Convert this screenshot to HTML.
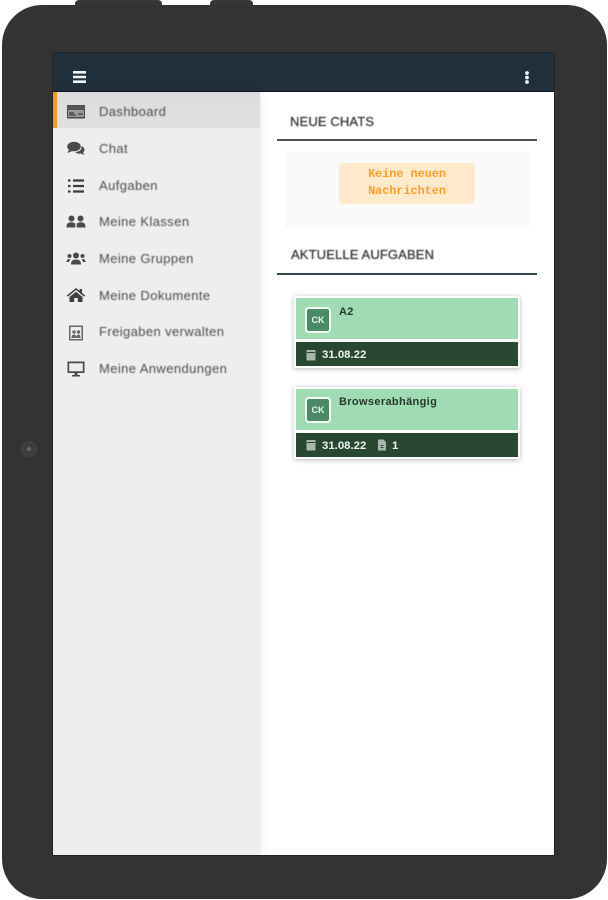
<!DOCTYPE html>
<html lang="de">
<head>
<meta charset="utf-8">
<title>Dashboard</title>
<style>
html,body{margin:0;padding:0;width:608px;height:900px;overflow:hidden;background:#fff;font-family:"Liberation Sans",sans-serif}
.a{position:absolute}
.btn{background:#363636;top:0;height:8px;border-radius:4px 4px 0 0}
#frame{left:2px;top:5px;width:605px;height:894px;background:#333;border-radius:40px}
#cam{left:21px;top:441px;width:16px;height:16px;border-radius:50%;background:#3c3c3c;box-shadow:inset 0 0 0 2px #444;filter:blur(.5px)}
#cam i{position:absolute;left:6px;top:6px;width:4px;height:4px;border-radius:50%;background:#6f6f6f}
#screen{left:53px;top:53px;width:501px;height:802px;background:#fff;box-shadow:0 0 0 .5px #111;overflow:hidden}
#bar{left:0;top:0;width:501px;height:38px;background:#1f2f3c;border-bottom:1px solid #10171f}
#side{left:0;top:39px;width:207px;height:763px;background:#eee;box-shadow:2px 0 7px rgba(0,0,0,.07)}
#active{left:0;top:0;width:207px;height:36px;background:linear-gradient(#dcdcdc,#e0e0e0)}
#act2{left:0;top:0;width:4px;height:36px;background:#f39a1f}
.item{left:46px;color:#4c4c4c;font-size:13px;letter-spacing:.4px;line-height:16px;white-space:nowrap;filter:blur(.4px)}
.ic{left:13px;width:20px;height:16px;filter:blur(.35px)}
.h{font-size:13px;color:#2a2f33;letter-spacing:.13px;line-height:16px;white-space:nowrap;filter:blur(.4px);-webkit-text-stroke:.2px #2a2f33}
.rule{left:224px;width:260px;height:2px;background:#4b5358}
#chatbox{left:232px;top:98px;width:245px;height:77px;background:#fafafa}
#msg{left:286px;top:110px;width:136px;height:41px;border-radius:4px;background:#ffe9cb;color:#ff9d2a;font:bold 11.8px/17px "Liberation Mono",monospace;text-align:center;padding-top:3px;box-sizing:border-box;filter:blur(.35px)}
.card{left:241px;width:226px;background:#fff;box-shadow:0 1px 5px rgba(0,0,0,.28)}
.top{position:absolute;left:2px;top:2px;width:222px;height:41px;background:#9fdcb3}
.bot{position:absolute;left:2px;top:46px;width:222px;height:24px;background:#274730;color:#f2f2f2;font-size:11.4px;font-weight:bold;line-height:26px;filter:blur(.3px)}
.ck{position:absolute;left:11px;width:26px;height:26px;box-sizing:border-box;border:2px solid #f4faf6;border-radius:4px;background:#4a8a66;color:#eaf6ee;font-size:9px;font-weight:bold;line-height:22px;text-align:center;filter:blur(.3px)}
.title{position:absolute;left:45px;font-size:11px;font-weight:bold;color:#26382c;letter-spacing:.35px;line-height:14px;filter:blur(.35px)}
.bot span{position:absolute;top:0;white-space:nowrap}
.bot svg{position:absolute;top:7px}
</style>
</head>
<body>
<div class="a btn" style="left:75px;width:87px"></div>
<div class="a btn" style="left:210px;width:43px"></div>
<div class="a" id="frame"></div>
<div class="a" id="cam"><i></i></div>
<div class="a" id="screen">
  <div class="a" id="bar">
    <svg class="a" style="left:20px;top:18px;filter:blur(.3px)" width="13" height="12" viewBox="0 0 13 12"><path d="M0 1.300h13M0 6h13M0 10.700h13" stroke="#f2f4f5" stroke-width="2.600"/></svg>
    <svg class="a" style="left:471px;top:18px;filter:blur(.3px)" width="6" height="13" viewBox="0 0 6 13"><circle cx="3" cy="2" r="1.900" fill="#f2f4f5"/><circle cx="3" cy="6.500" r="1.900" fill="#f2f4f5"/><circle cx="3" cy="11" r="1.900" fill="#f2f4f5"/></svg>
  </div>
  <div class="a" id="side">
    <div class="a" id="active"></div>
    <div class="a" id="act2"></div>

    <svg class="a ic" style="top:12px" viewBox="0 0 20 16"><path fill="#4a4a4a" d="M1 1h18v13.500H1zM2 6v7h16V6z" fill-rule="evenodd"/><rect x="1" y="2" width="18" height="3.500" fill="#555"/><path d="M3 9h5M3 11h7M12 10h5" stroke="#4a4a4a" stroke-width="1.500"/><rect x="2" y="6" width="16" height="7" fill="#4a4a4a" opacity=".45"/></svg>
    <div class="a item" style="top:12px">Dashboard</div>

    <svg class="a ic" style="top:49px" viewBox="0 0 20 16"><ellipse cx="8" cy="5.500" rx="6.800" ry="4.800" fill="#4a4a4a"/><path d="M3 8.500 1.500 12 6.500 10z" fill="#4a4a4a"/><path d="M15.500 5c2 1 3 2.200 3 3.800 0 1.200-.5 2-1.300 2.700l1 2.500-3.500-1.500c-2 .5-4.200 0-5.500-1.500 3.800 0 7-2 6.300-6z" fill="#4a4a4a"/></svg>
    <div class="a item" style="top:49px">Chat</div>

    <svg class="a ic" style="top:86px" viewBox="0 0 20 16"><path d="M2 2.500h2.500M2 8h2.500M2 13.500h2.500M7 2.500h11M7 8h11M7 13.500h11" stroke="#3c3c3c" stroke-width="2.200"/></svg>
    <div class="a item" style="top:86px">Aufgaben</div>

    <svg class="a ic" style="top:122px" viewBox="0 0 20 16"><circle cx="5.500" cy="4.500" r="3" fill="#4a4a4a"/><circle cx="14.500" cy="4.500" r="3" fill="#4a4a4a"/><path d="M.5 13.500c0-4 1.500-5.200 5-5.200 1.800 0 3 .5 3.800 1.500v3.700zM10.700 13.500V9.800c.8-1 2-1.500 3.800-1.500 3.500 0 5 1.200 5 5.200z" fill="#4a4a4a"/></svg>
    <div class="a item" style="top:122px">Meine Klassen</div>

    <svg class="a ic" style="top:159px" viewBox="0 0 20 16"><circle cx="10" cy="4.500" r="3" fill="#4a4a4a"/><circle cx="3.500" cy="5" r="2" fill="#4a4a4a"/><circle cx="16.500" cy="5" r="2" fill="#4a4a4a"/><path d="M5 13.500c0-3.500 1.500-5 5-5s5 1.500 5 5zM.5 11c0-2 1-3 3-3l1 .3c-1 1-1.300 1.700-1.500 2.700zM19.500 11c0-2-1-3-3-3l-1 .3c1 1 1.300 1.700 1.500 2.700z" fill="#4a4a4a"/></svg>
    <div class="a item" style="top:159px">Meine Gruppen</div>

    <svg class="a ic" style="top:195px" viewBox="0 0 20 16"><path d="M10 1 .8 8.500l1 1.200L10 3l8.200 6.700 1-1.200-3.200-2.600V2h-2.500v2z" fill="#3f3f3f"/><path d="M3.500 10 10 4.700l6.500 5.300v5h-4.700v-4H8.200v4H3.500z" fill="#3f3f3f"/></svg>
    <div class="a item" style="top:196px">Meine Dokumente</div>

    <svg class="a ic" style="top:233px" viewBox="0 0 20 16"><path d="M3 .5h14v15H3zM4.500 2v12h11V2z" fill="#666" fill-rule="evenodd"/><circle cx="8" cy="7" r="1.700" fill="#666"/><circle cx="12.500" cy="7" r="1.700" fill="#666"/><path d="M5.500 13c0-2.500 1-3.500 2.500-3.500s2.500 1 2.500 3.500zM10.500 13c0-2.500.7-3.500 2-3.500s2 1 2 3.500z" fill="#666"/></svg>
    <div class="a item" style="top:232px">Freigaben verwalten</div>

    <svg class="a ic" style="top:269px" viewBox="0 0 20 16"><path d="M1.500 .5h17v11.500h-17zM3.200 2.200v8h13.600v-8z" fill="#4a4a4a" fill-rule="evenodd"/><path d="M8.500 12h3v2h2.500v1.500H6V14h2.500z" fill="#4a4a4a"/></svg>
    <div class="a item" style="top:269px">Meine Anwendungen</div>
  </div>

  <div class="a h" style="left:237px;top:61px">NEUE CHATS</div>
  <div class="a rule" style="top:86px"></div>
  <div class="a" id="chatbox"></div>
  <div class="a" id="msg">Keine neuen<br>Nachrichten</div>
  <div class="a h" style="left:238px;top:194px">AKTUELLE AUFGABEN</div>
  <div class="a rule" style="top:220px;background:#37474f"></div>

  <div class="a card" style="top:243px;height:72px">
    <div class="top"></div>
    <div class="ck" style="top:11px">CK</div>
    <div class="title" style="top:9px">A2</div>
    <div class="bot">
      <svg style="left:10px;top:7px" width="10" height="12" viewBox="0 0 10 12"><path d="M.5 1h9v10.500h-9z" fill="#aab5ad"/><path d="M1 3.500h8" stroke="#274730"/></svg>
      <span style="left:26px">31.08.22</span>
    </div>
  </div>

  <div class="a card" style="top:334px;height:72px">
    <div class="top"></div>
    <div class="ck" style="top:10px">CK</div>
    <div class="title" style="top:8px">Browserabhängig</div>
    <div class="bot">
      <svg style="left:10px;top:6px" width="10" height="12" viewBox="0 0 10 12"><path d="M.5 1h9v10.500h-9z" fill="#aab5ad"/><path d="M1 3.500h8" stroke="#274730"/></svg>
      <span style="left:26px">31.08.22</span>
      <svg style="left:81px;top:6px" width="10" height="12" viewBox="0 0 10 12"><path d="M1 .5h5.500L9 3v8.500H1z" fill="#aab5ad"/><path d="M3.500 6.500h3M3.500 8.500h3" stroke="#274730"/></svg>
      <span style="left:96px">1</span>
    </div>
  </div>
</div>
</body>
</html>
